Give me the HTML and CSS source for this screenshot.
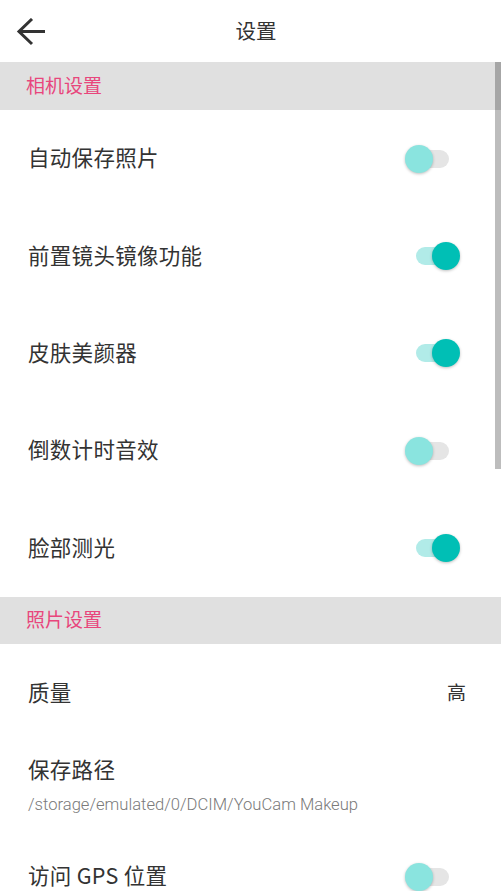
FILE: index.html
```html
<!DOCTYPE html>
<html>
<head>
<meta charset="utf-8">
<link rel="stylesheet" href="styles.css">
</head>
<body>
<div class="app">
  <header class="topbar">
    <svg class="back" width="30" height="30" viewBox="0 0 30 30">
      <path d="M3 13.5 H29 M16 1 L3 13.5 L16 26" fill="none" stroke="#333" stroke-width="3" stroke-linecap="butt" stroke-linejoin="miter"/>
    </svg>
    <div class="title">设置</div>
  </header>
  <div class="content">
    <div class="scrollbar"></div>
    <div class="section first">相机设置</div>
    <div class="row"><span class="label">自动保存照片</span><span class="switch off"><span class="track"></span><span class="thumb"></span></span></div>
    <div class="row"><span class="label">前置镜头镜像功能</span><span class="switch on"><span class="track"></span><span class="thumb"></span></span></div>
    <div class="row"><span class="label">皮肤美颜器</span><span class="switch on"><span class="track"></span><span class="thumb"></span></span></div>
    <div class="row"><span class="label">倒数计时音效</span><span class="switch off"><span class="track"></span><span class="thumb"></span></span></div>
    <div class="row"><span class="label">脸部测光</span><span class="switch on"><span class="track"></span><span class="thumb"></span></span></div>
    <div class="section second">照片设置</div>
    <div class="row quality"><span class="label">质量</span><span class="value">高</span></div>
    <div class="row path">
      <div class="label">保存路径</div>
      <div class="sub">/storage/emulated/0/DCIM/YouCam Makeup</div>
    </div>
    <div class="row gps"><span class="label">访问 GPS 位置</span><span class="switch off"><span class="track"></span><span class="thumb"></span></span></div>
  </div>
</div>
</body>
</html>
```

FILE: styles.css
```css
html, body {
  margin: 0;
  padding: 0;
  background: #fff;
}
body {
  font-family: Roboto, "Noto Sans CJK SC", sans-serif;
  color: #333;
  overflow: hidden;
}
.app {
  width: 501px;
  height: 891px;
  overflow: hidden;
}
.topbar {
  height: 62px;
  position: relative;
  display: flex;
  align-items: center;
  justify-content: center;
  padding-left: 11px;
  box-sizing: border-box;
}
.back {
  position: absolute;
  left: 16px;
  top: 18px;
}
.title {
  font-size: 20.5px;
  color: #333;
  font-family: "Noto Sans CJK SC", sans-serif;
  margin-bottom: 2px;
}
.content {
  position: relative;
}
.scrollbar {
  position: absolute;
  right: 0;
  top: 0;
  width: 6px;
  height: 407px;
  background: rgba(0, 0, 0, 0.26);
}
.section {
  background: #e0e0e0;
  color: #e8467c;
  font-family: "Noto Sans CJK SC", sans-serif;
  font-size: 19px;
  padding-left: 26px;
  padding-bottom: 3px;
  box-sizing: border-box;
  display: flex;
  align-items: center;
}
.section.first { height: 48px; }
.section.second { height: 47px; }
.row {
  height: 97.4px;
  display: flex;
  align-items: center;
  justify-content: space-between;
  padding: 0 40px 0 28px;
  box-sizing: border-box;
}
.label {
  font-family: "Noto Sans CJK SC", sans-serif;
  font-size: 21.5px;
  color: #333;
  letter-spacing: 0.3px;
  margin-bottom: 4px;
}
.value {
  font-family: "Noto Sans CJK SC", sans-serif;
  font-size: 19px;
  color: #333;
  margin-right: -5px;
  margin-bottom: 4px;
}
.row.quality {
  height: 99px;
}
.row.path {
  height: 97px;
  flex-direction: column;
  align-items: flex-start;
  justify-content: flex-start;
  padding-top: 10px;
}
.row.path .label {
  margin-bottom: 0;
}
.row.path .sub {
  font-family: Roboto, sans-serif;
  font-size: 16.6px;
  font-weight: 300;
  color: #7a7a7a;
  margin-top: 11px;
}
.row.gps {
  height: 74px;
}
.switch {
  position: relative;
  width: 56px;
  height: 28px;
  flex: none;
}
.switch .track {
  position: absolute;
  left: 11px;
  top: 5px;
  width: 33px;
  height: 18px;
  border-radius: 9px;
}
.switch .thumb {
  position: absolute;
  top: 0;
  width: 28px;
  height: 28px;
  border-radius: 50%;
  box-shadow: 0 1px 3px rgba(0, 0, 0, 0.25);
}
.switch.off .track { background: #e5e5e5; }
.switch.off .thumb { left: 0; background: #8ae4df; }
.switch.on .track { background: #b1ebe8; }
.switch.on .thumb { left: 27px; background: #00bfb5; }
```
